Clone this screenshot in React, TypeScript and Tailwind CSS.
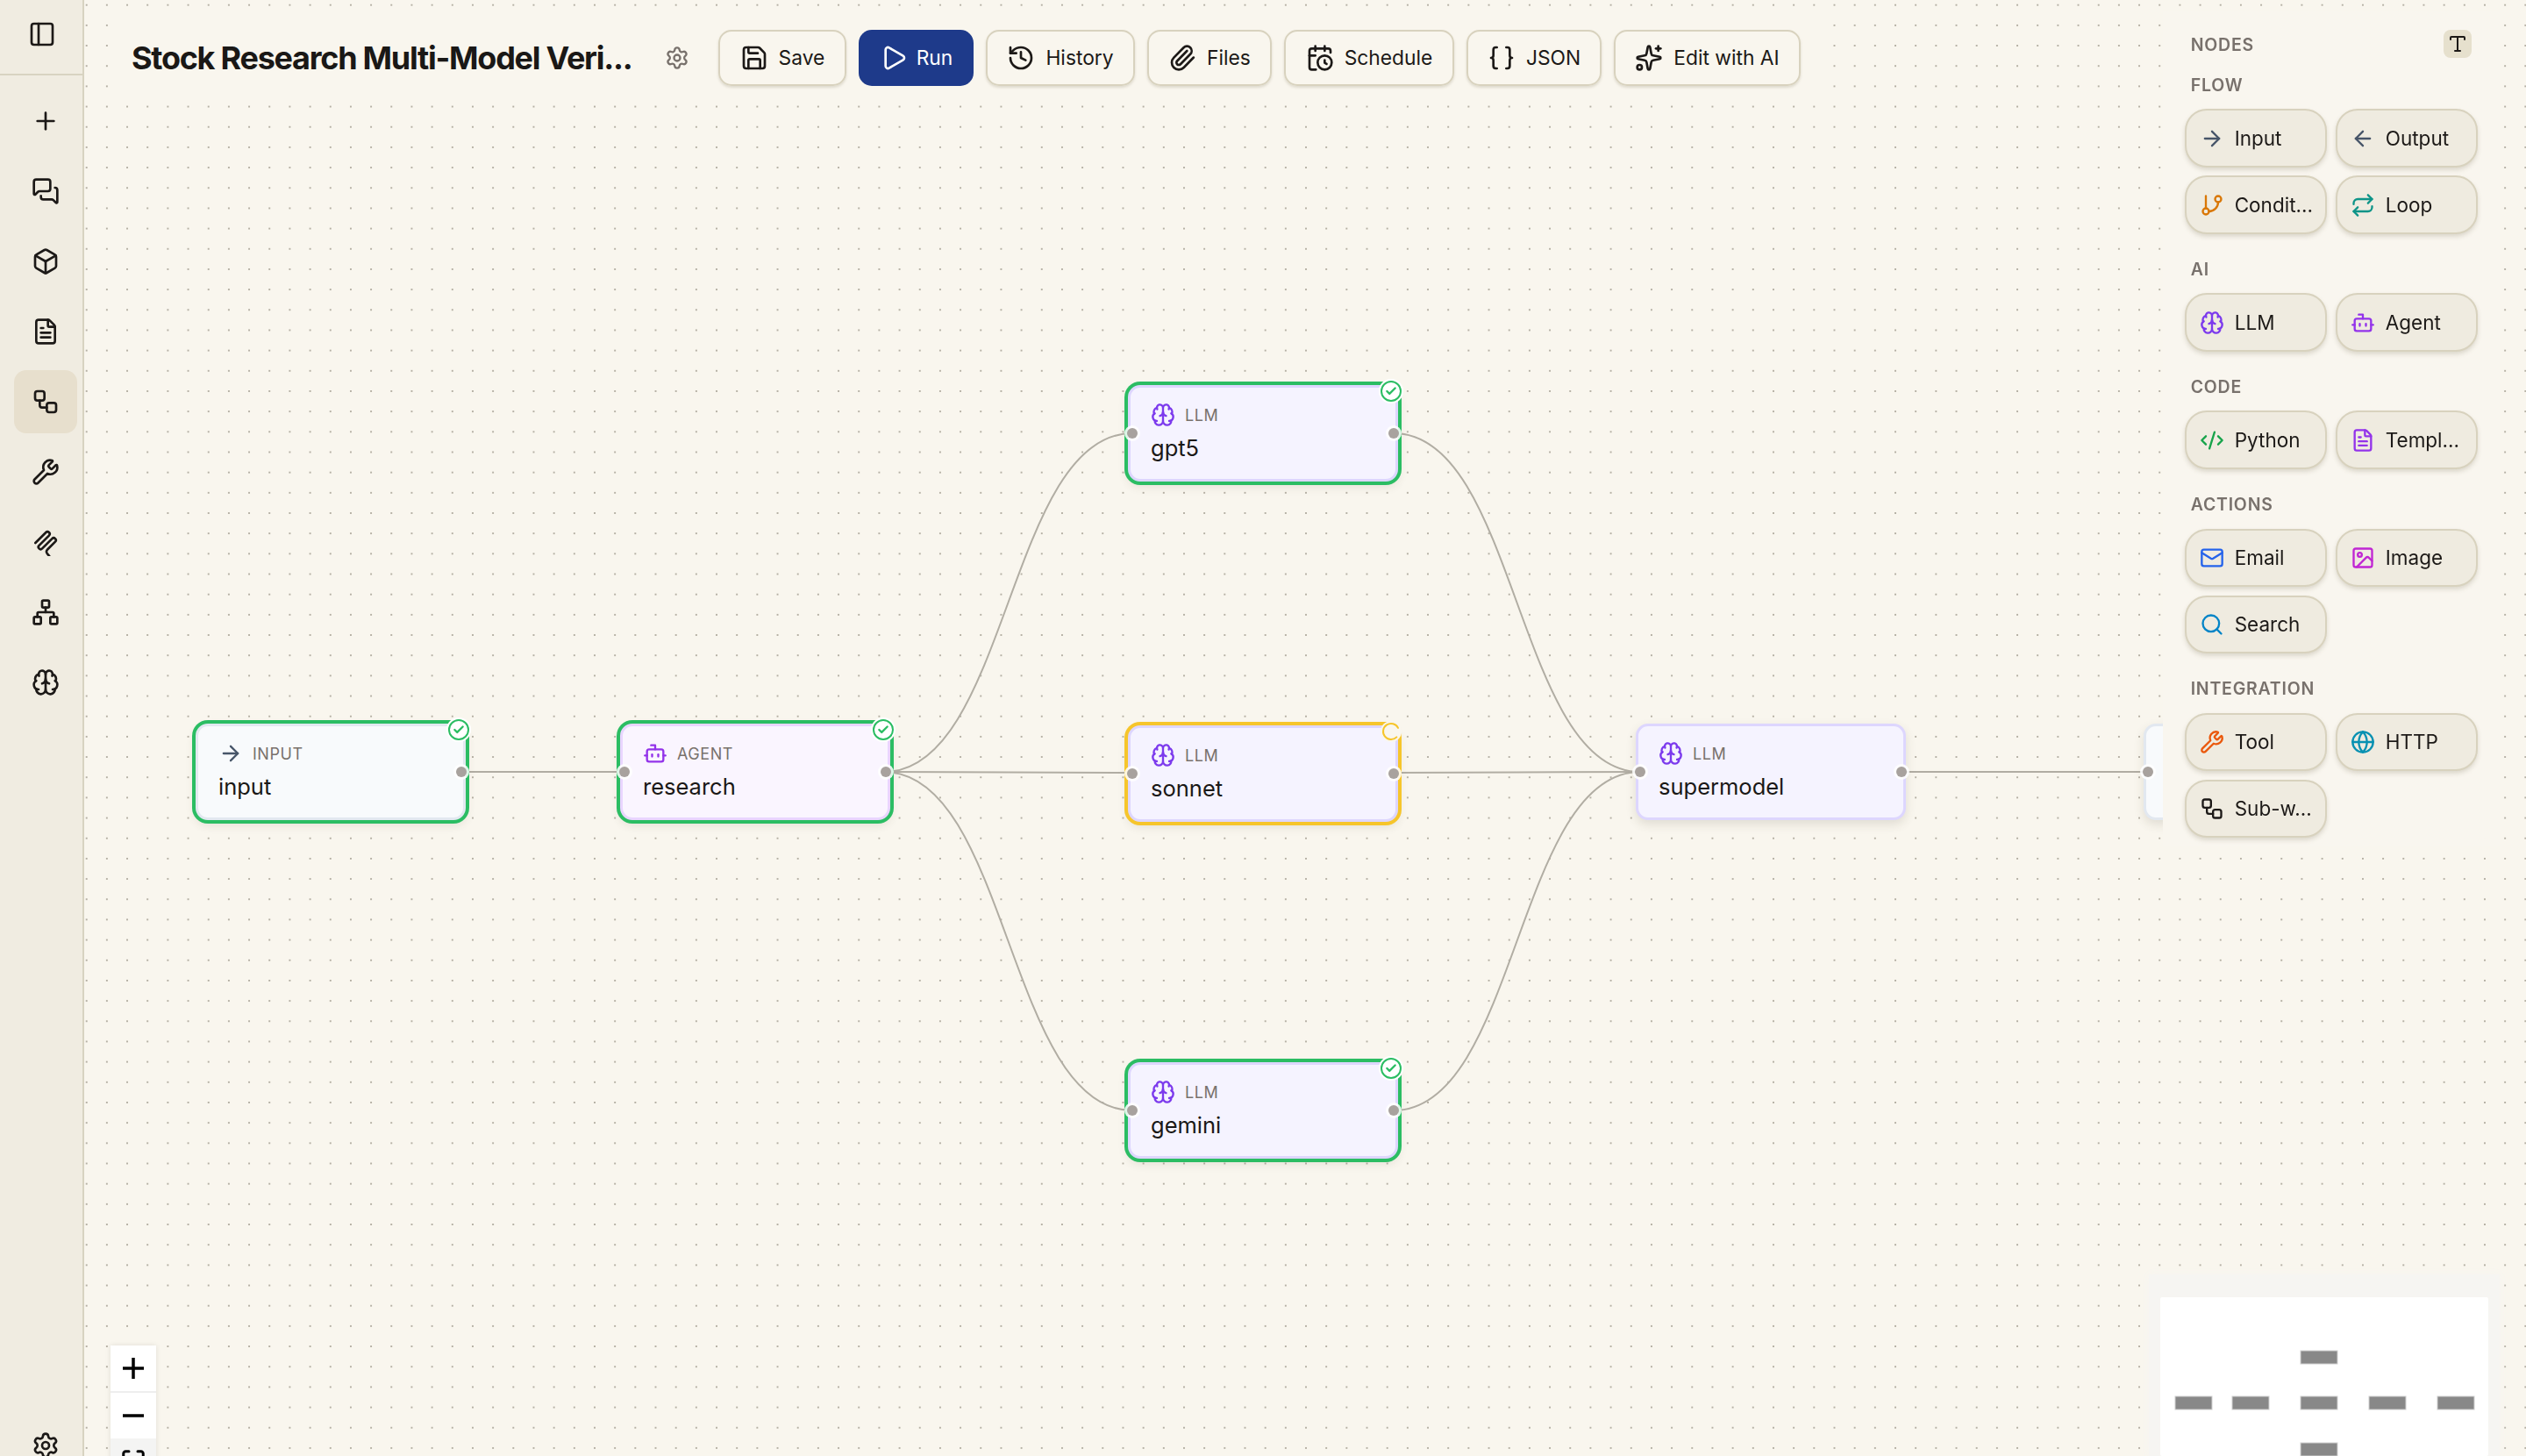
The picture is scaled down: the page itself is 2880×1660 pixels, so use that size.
import {
  ArrowLeft, ArrowRight, Bot, Box, Brain, Braces, CalendarClock, Check, CodeXml, FileText, GitBranch, Globe, History,
  Image, LoaderCircle, Mail, Maximize, MessagesSquare, Network, PanelLeft, Paperclip, Play, Plus, Repeat, Save, Search,
  Settings, Sparkles, Type, Workflow, Wrench,
} from "lucide-react";

const ink = "text-[#1c1917]";

// the sidebar's clip is a zigzag one, lucide only has the plain clip
function ZigzagClip({ size = 32, strokeWidth = 2 }: { size?: number; strokeWidth?: number }) {
  return (
    <svg
      width={size}
      height={size}
      viewBox="-16 -16 32 32"
      fill="none"
      stroke="currentColor"
      strokeWidth={strokeWidth * 1.33}
      strokeLinecap="round"
      strokeLinejoin="round"
    >
      <path
        transform="rotate(45)"
        d="M-7.5 9V-8a2.5 2.5 0 0 1 5 0V8a2.5 2.5 0 0 0 5 0V-8a2.5 2.5 0 0 1 5 0V4.5q0 3 3 3.5l4 .4"
      />
    </svg>
  );
}

// sidebar icons, top to bottom
const navItems = [
  { icon: MessagesSquare },
  { icon: Box },
  { icon: FileText },
  { icon: Workflow, active: true },
  { icon: Wrench },
  { icon: ZigzagClip },
  { icon: Network },
  { icon: Brain },
];

const toolbarButtons = [
  { label: "Save", icon: Save, width: "w-[146px]" },
  { label: "History", icon: History, width: "w-[170px]" },
  { label: "Files", icon: Paperclip, width: "w-[142px]" },
  { label: "Schedule", icon: CalendarClock, width: "w-[194px]" },
  { label: "JSON", icon: Braces, width: "w-[154px]" },
  { label: "Edit with AI", icon: Sparkles, width: "w-[213px]" },
];

const palette = [
  {
    title: "FLOW",
    items: [
      { label: "Input", icon: ArrowRight, color: "text-[#475569]" },
      { label: "Output", icon: ArrowLeft, color: "text-[#475569]" },
      { label: "Condit...", icon: GitBranch, color: "text-[#d97706]" },
      { label: "Loop", icon: Repeat, color: "text-[#0d9488]" },
    ],
  },
  {
    title: "AI",
    items: [
      { label: "LLM", icon: Brain, color: "text-[#7c3aed]" },
      { label: "Agent", icon: Bot, color: "text-[#9333ea]" },
    ],
  },
  {
    title: "CODE",
    items: [
      { label: "Python", icon: CodeXml, color: "text-[#16a34a]" },
      { label: "Templ...", icon: FileText, color: "text-[#9333ea]" },
    ],
  },
  {
    title: "ACTIONS",
    items: [
      { label: "Email", icon: Mail, color: "text-[#2563eb]" },
      { label: "Image", icon: Image, color: "text-[#c026d3]" },
      { label: "Search", icon: Search, color: "text-[#0284c7]" },
    ],
  },
  {
    title: "INTEGRATION",
    items: [
      { label: "Tool", icon: Wrench, color: "text-[#ea580c]" },
      { label: "HTTP", icon: Globe, color: "text-[#0891b2]" },
      { label: "Sub-w...", icon: Workflow, color: "text-[#1c1917]" },
    ],
  },
];

type FlowNode = {
  name: string;
  type: string;
  icon: typeof Brain;
  iconColor: string;
  tone: string;
  place: string;
  status?: "done" | "running";
  bare?: boolean; // sits under the palette, nothing of its body shows
};

const llm = { icon: Brain, type: "LLM", iconColor: "text-[#7c3aed]", tone: "bg-[#f5f3ff] border-[#ddd6fe]" };

// canvas nodes; places are relative to the canvas, which starts right of the sidebar
const nodes: FlowNode[] = [
  { name: "input", type: "INPUT", icon: ArrowRight, iconColor: "text-[#475569]", tone: "bg-[#f8fafc] border-[#e2e8f0]", place: "left-[127px] top-[825px]", status: "done" },
  { name: "research", type: "AGENT", icon: Bot, iconColor: "text-[#9333ea]", tone: "bg-[#faf5ff] border-[#e9d5ff]", place: "left-[611px] top-[825px]", status: "done" },
  { name: "gpt5", ...llm, place: "left-[1190px] top-[439px]", status: "done" },
  { name: "sonnet", ...llm, place: "left-[1190px] top-[827px]", status: "running" },
  { name: "gemini", ...llm, place: "left-[1190px] top-[1211px]", status: "done" },
  { name: "supermodel", ...llm, place: "left-[1769px] top-[825px]" },
  { name: "output", type: "OUTPUT", icon: ArrowLeft, iconColor: "text-[#475569]", tone: "bg-[#f8fafc] border-[#e2e8f0]", place: "left-[2348px] top-[825px]", bare: true },
];

const edges = [
  [430, 880, 616, 880],
  [912, 880, 1195, 494],
  [912, 880, 1195, 881],
  [912, 880, 1195, 1266],
  [1493, 494, 1774, 880],
  [1493, 881, 1774, 880],
  [1493, 1266, 1774, 880],
  [2071, 880, 2354, 880],
];

const miniBars = [
  [160, 61],
  [17, 113],
  [82, 113],
  [160, 113],
  [238, 113],
  [316, 113],
  [160, 166],
];

function Handle({ side }: { side: "left" | "right" }) {
  return (
    <span
      className={`absolute top-1/2 h-3 w-3 -translate-y-1/2 rounded-full bg-[#a8a29e] ring-[3px] ring-white/85 ${
        side === "left" ? "left-[-4px]" : "right-[-4px]"
      }`}
    />
  );
}

function CanvasNode({ node }: { node: FlowNode }) {
  const Icon = node.icon;
  const ringClass =
    node.status === "done" ? "ring-4 ring-[#2bbd63]" : node.status === "running" ? "ring-4 ring-[#f6c52b]" : "";
  return (
    <div
      className={`absolute flex h-[110px] w-[308px] flex-col rounded-[14px] border-[3px] pl-[23px] pt-[17px] shadow-[0_5px_12px_rgba(80,70,50,0.14)] ${node.tone} ${ringClass} ${node.place}`}
    >
      {!node.bare && (
        <>
          <div className="flex h-7 items-center gap-[11px]">
            <Icon size={28} strokeWidth={2} className={node.iconColor} />
            <span className="text-[18px] tracking-[0.03em] text-[#78716c]">{node.type}</span>
          </div>
          <div className="mt-2 text-[25.5px] font-normal leading-8 text-[#1a1816]">{node.name}</div>
        </>
      )}
      {node.type !== "INPUT" && <Handle side="left" />}
      {!node.bare && <Handle side="right" />}
      {node.status === "done" && (
        <span className="absolute right-[-7px] top-[-8px] flex h-[24px] w-[24px] items-center justify-center rounded-full border-2 border-[#2bbd63] bg-white ring-2 ring-white">
          <Check size={14} strokeWidth={4} className="text-[#2bbd63]" />
        </span>
      )}
      {node.status === "running" && (
        <span className="absolute right-[-7px] top-[-8px] flex h-[24px] w-[24px] items-center justify-center rounded-full bg-[#f9f6ee]">
          <LoaderCircle size={28} strokeWidth={2} className="rotate-[45deg] text-[#f6c52b]" />
        </span>
      )}
    </div>
  );
}

export default function App() {
  return (
    <div className={`flex h-[1660px] w-[2880px] overflow-hidden bg-[#f9f6ee] font-['Inter',sans-serif] ${ink}`}>
      <aside className="flex h-full w-[96px] shrink-0 flex-col border-r-2 border-[#d8d3c1] bg-[#f0ece1]">
        <div className="flex h-[86px] shrink-0 items-center justify-center border-b-2 border-[#d8d3c1] pb-[7px] pl-[2px]">
          <PanelLeft size={32} strokeWidth={2} />
        </div>
        <div className="flex flex-1 flex-col items-center pl-[10px] pt-[16px]">
          <div className="mb-2 flex h-[72px] w-[72px] items-center justify-center">
            <Plus size={32} strokeWidth={2} />
          </div>
          <div className="flex flex-col gap-2">
            {navItems.map(({ icon: Icon, active }, i) => (
              <div
                key={i}
                className={`flex h-[72px] w-[72px] items-center justify-center rounded-[14px] ${active ? "bg-[#e7dfcd]" : ""}`}
              >
                <Icon size={32} strokeWidth={2} />
              </div>
            ))}
          </div>
          <div className="mt-auto flex h-[28px] items-start justify-center">
            <Settings size={32} strokeWidth={2} />
          </div>
        </div>
      </aside>

      <main className="relative h-full flex-1 overflow-hidden bg-[radial-gradient(circle,#b5b0a4_1.1px,transparent_1.5px)] bg-[length:23.18px_23.18px] bg-[position:-8.9px_-5.9px]">
        <svg className="absolute left-0 top-0" width={2784} height={1660} fill="none">
          {edges.map(([sx, sy, tx, ty], i) => {
            const mx = (sx + tx) / 2;
            return <path key={i} d={`M${sx} ${sy} C${mx} ${sy} ${mx} ${ty} ${tx} ${ty}`} stroke="#b1ada3" strokeWidth={2} />;
          })}
        </svg>

        {nodes.map((node) => (
          <CanvasNode key={node.name} node={node} />
        ))}

        {/* top toolbar */}
        <div className="absolute left-[34px] top-[16px] flex h-[100px] w-[1950px] items-center bg-[#f9f6ee] pl-5">
          <h1 className="w-[568px] whitespace-nowrap text-[36px] font-bold leading-none tracking-[-0.035em] text-[#1a1816]">
            Stock Research Multi-Model Veri...
          </h1>
          <Settings size={28} strokeWidth={2} className="ml-[40px] text-[#78716c]" />
          <div className="ml-[33px] flex items-center gap-[14px]">
            {toolbarButtons.map(({ label, icon: Icon, width }, i) => (
              <div key={label} className="contents">
                <button
                  className={`flex h-[64px] items-center justify-center gap-3 rounded-[15px] border-2 border-[#d8d2be] text-[22.8px] shadow-[0_2px_3px_rgba(120,110,80,0.2)] ${width}`}
                >
                  <Icon size={32} strokeWidth={2} />
                  {label}
                </button>
                {i === 0 && (
                  <button className="flex h-[64px] w-[131px] items-center justify-center gap-[10px] rounded-[15px] bg-[#1e3a8a] text-[22.8px] text-white">
                    <Play size={32} strokeWidth={2} />
                    Run
                  </button>
                )}
              </div>
            ))}
          </div>
        </div>

        {/* node palette */}
        <div className="absolute left-[2370px] top-[12px] h-[953px] w-[384px] bg-[#f9f6ee]/97 px-[24.7px] pt-[22px] backdrop-blur-md">
          <div className="mx-[7px] flex h-8 items-center justify-between">
            <span className="pt-[3px] text-[19.5px] font-semibold tracking-[0.04em] text-[#78716c]">NODES</span>
            <span className="flex h-8 w-8 items-center justify-center rounded-lg bg-[#e6e0cd]">
              <Type size={24} strokeWidth={2} />
            </span>
          </div>
          <div className="mt-[17.7px] flex flex-col gap-[27px]">
            {palette.map((section) => (
              <section key={section.title}>
                <h2 className="mb-[14.6px] px-[7px] text-[19.5px] font-semibold leading-[26px] tracking-[0.04em] text-[#78716c]">
                  {section.title}
                </h2>
                <div className="grid grid-cols-2 gap-[9.5px]">
                  {section.items.map(({ label, icon: Icon, color }) => (
                    <div
                      key={label}
                      className="flex h-[66.5px] items-center gap-3 rounded-[25px] border-2 border-[#d8d2be] bg-[#efebe0] pl-[15px] text-[22.5px] shadow-[0_3px_5px_rgba(120,110,80,0.22)]"
                    >
                      <Icon size={28} strokeWidth={2} className={color} />
                      {label}
                    </div>
                  ))}
                </div>
              </section>
            ))}
          </div>
        </div>

        {/* zoom controls */}
        <div className="absolute left-[30px] top-[1534px] w-[52px] shadow-[0_0_6px_rgba(0,0,0,0.1)]">
          <button className="flex h-[54px] w-full items-center justify-center border-b-2 border-[#eeeeee] bg-white">
            <svg width={24} height={24} viewBox="0 0 24 24" stroke="#000" strokeWidth={3.5}>
              <path d="M12 0v24M0 12h24" />
            </svg>
          </button>
          <button className="flex h-[52px] w-full items-center justify-center bg-white">
            <svg width={24} height={24} viewBox="0 0 24 24" stroke="#000" strokeWidth={3.5}>
              <path d="M0 12h24" />
            </svg>
          </button>
          <button className="flex h-[52px] w-full items-center justify-center bg-[#f4f4f3]">
            <Maximize size={30} strokeWidth={2.4} className="text-black" />
          </button>
        </div>

        {/* minimap */}
        <div className="absolute left-[2354px] top-[1453px] h-[207px] w-[400px] bg-[#f6f5f2] px-[13px] pt-[26px] shadow-[0_0_10px_#f6f5f2]">
          <div className="h-full w-[374px] rounded-[2px] bg-white">
            <svg width={374} height={181}>
              {miniBars.map(([x, y], i) => (
                <rect key={i} x={x} y={y} width={42} height={15} fill="#888888" stroke="#d0d0d0" />
              ))}
            </svg>
          </div>
        </div>
      </main>
    </div>
  );
}
